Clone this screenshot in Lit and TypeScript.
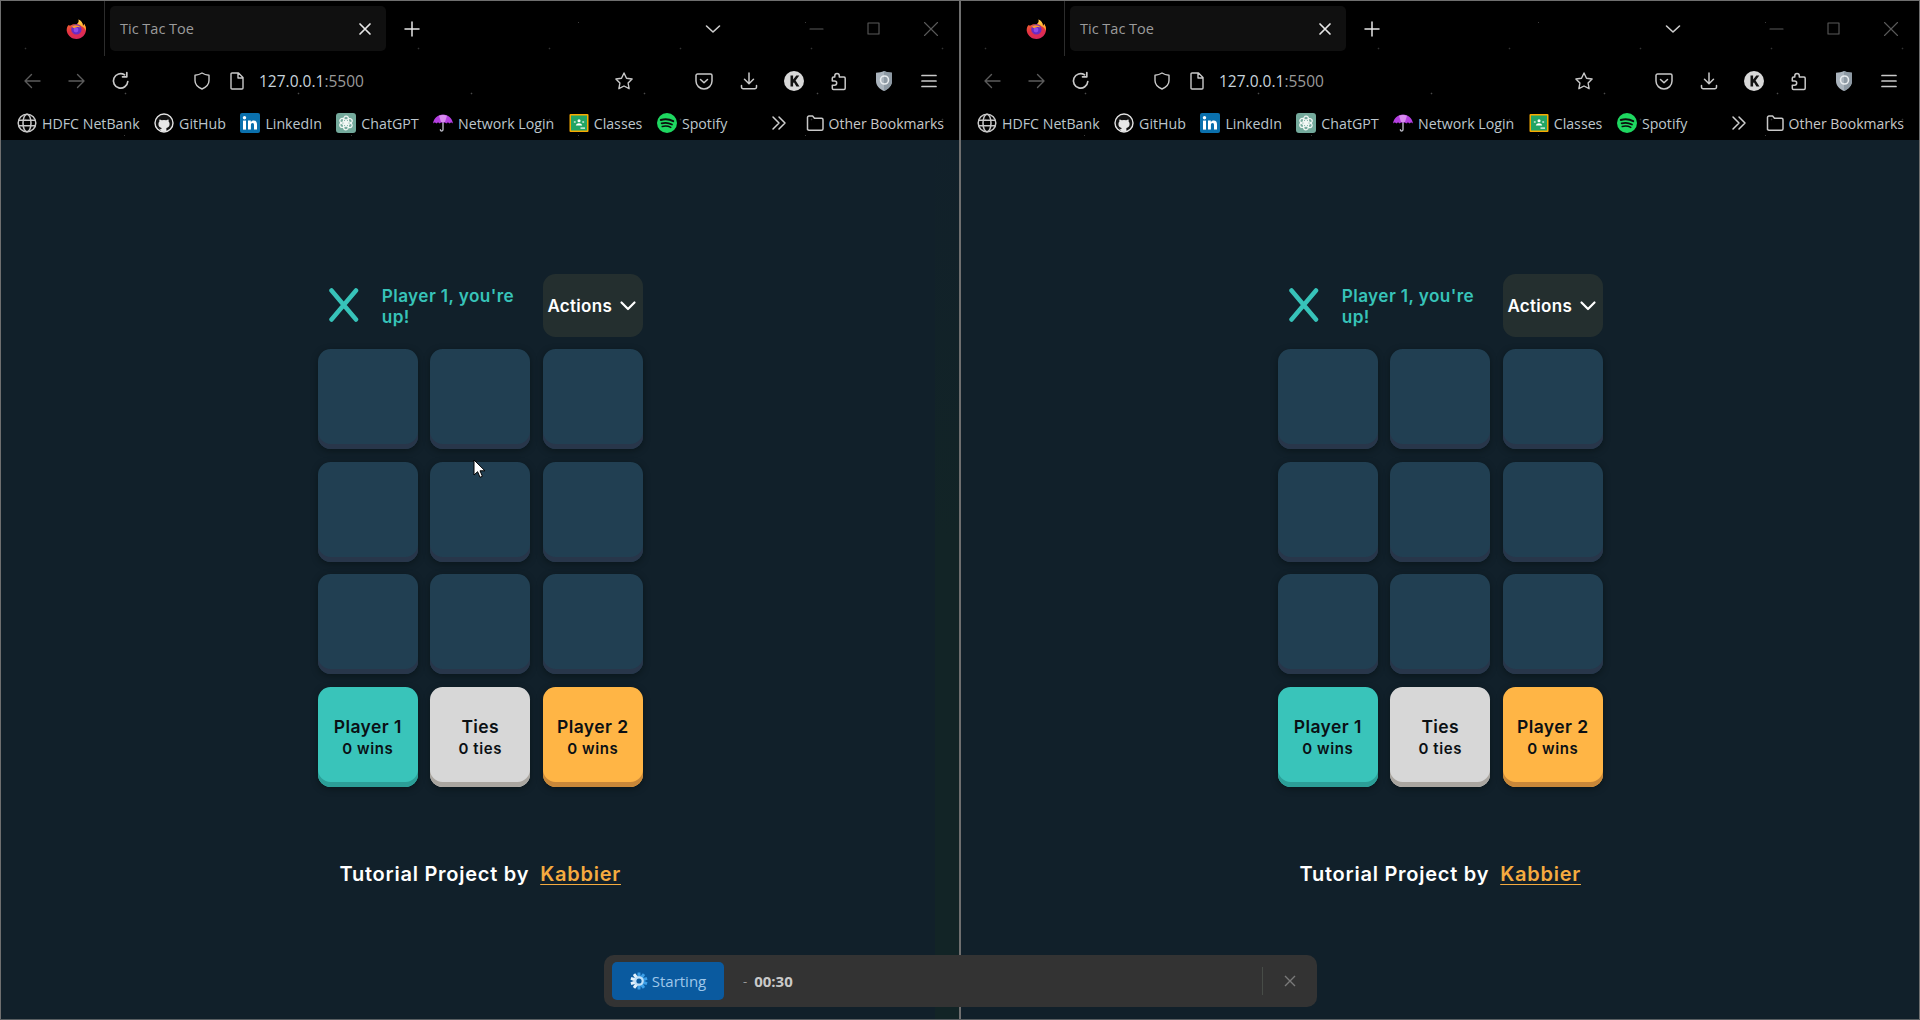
import { LitElement, html, css, svg } from "lit";
import { customElement } from "lit/decorators.js";

const line = (d: string, size = 20, sw = 1.6) => html`<svg
  width=${size}
  height=${size}
  viewBox="0 0 20 20"
  fill="none"
  stroke="currentColor"
  stroke-width=${sw}
  stroke-linecap="round"
  stroke-linejoin="round"
>
  ${svg`<path d=${d}></path>`}
</svg>`;

const firefox = html`<svg width="21" height="21" viewBox="0 0 21 21">
  <defs>
    <linearGradient id="ffa" x1="0" y1="0" x2="0.3" y2="1">
      <stop offset="0" stop-color="#f58a2c"></stop>
      <stop offset="0.6" stop-color="#e8343f"></stop>
      <stop offset="1" stop-color="#d92a5c"></stop>
    </linearGradient>
    <linearGradient id="ffb" x1="0.5" y1="0" x2="0.5" y2="1">
      <stop offset="0" stop-color="#ffe14d"></stop>
      <stop offset="1" stop-color="#ff8a1e"></stop>
    </linearGradient>
  </defs>
  <path
    d="M2.2 6.2 C0.6 8.4 0.4 11 1 13 C2.2 17.2 6 20 10.4 20 C15.8 20 20 15.8 20 10.6 C20 8.6 19.4 6.6 18 4.8 C18 6 17.6 6.6 17 7 C16.8 3.6 14.6 1.2 12.6 0.4 C13.4 3 12 4.4 10.4 5.4 C8.4 5 6 5.4 4.6 6.6 C3.8 6.4 3 6 2.2 6.2 Z"
    fill="url(#ffa)"
  ></path>
  <path
    d="M12.6 0.4 C14.8 1.4 17 3.8 17 7 C17.6 6.6 18 6 18 4.8 C19.6 7 20.4 9.6 19.8 12 C19 9.4 17.6 8 15.6 7.2 C14.2 5.8 12.4 5 10.6 5.2 C12 4.4 13.4 3 12.6 0.4 Z"
    fill="url(#ffb)"
  ></path>
  <circle cx="10.4" cy="10.4" r="5.2" fill="#6a2bc4"></circle>
  <path d="M6 7.4 C8 5.8 12.4 5.4 14.6 8.6 C12 7.4 10 8.2 9 9.4 C7.6 9 6.6 8.4 6 7.4 Z" fill="#ff9a2c"></path>
  <circle cx="10" cy="11" r="2.4" fill="#8f4be8"></circle>
</svg>`;

const globe = html`<svg width="20" height="20" viewBox="0 0 20 20" fill="none" stroke="#c8c8c8" stroke-width="1.5">
  <circle cx="10" cy="10" r="8.8"></circle>
  <ellipse cx="10" cy="10" rx="4" ry="8.8"></ellipse>
  <path d="M1.6 7.2h16.8M1.6 12.8h16.8"></path>
</svg>`;

const github = html`<svg width="20" height="20" viewBox="0 0 20 20">
  <circle cx="10" cy="10" r="9" fill="#111" stroke="#e4e4e4" stroke-width="1.4"></circle>
  <path
    d="M7.6 18.4v-2.6c-2 .4-2.6-.8-2.8-1.4 M7.6 18.4V15c-1.8-.4-3.2-1.4-3.2-4 0-1 .4-1.8 1-2.4-.2-.6-.2-1.4.1-2.2.8 0 1.6.4 2.2.9a8 8 0 0 1 4.6 0c.6-.5 1.4-.9 2.2-.9.3.8.3 1.6.1 2.2.6.6 1 1.4 1 2.4 0 2.6-1.4 3.6-3.2 4v3.4 Z"
    fill="#e8e8e8"
  ></path>
</svg>`;

const linkedin = html`<svg width="20" height="20" viewBox="0 0 20 20">
  <rect width="20" height="20" rx="2" fill="#0a70ad"></rect>
  <rect x="3" y="7.6" width="3" height="9" fill="#fff"></rect>
  <circle cx="4.5" cy="4.8" r="1.7" fill="#fff"></circle>
  <path d="M8 7.6h2.8v1.3c.6-.9 1.6-1.5 2.9-1.5 2.4 0 3.3 1.5 3.3 4v5.2h-3v-4.6c0-1.2-.3-2-1.4-2-1.2 0-1.7.9-1.7 2v4.6H8Z" fill="#fff"></path>
</svg>`;

const chatgpt = html`<svg width="20" height="20" viewBox="0 0 20 20">
  <rect width="20" height="20" rx="3" fill="#74aa9c"></rect>
  <g fill="none" stroke="#f2f7f5" stroke-width="1.2">
    ${[0, 60, 120, 180, 240, 300].map(
      (a) => svg`<ellipse cx="10" cy="6.8" rx="2.6" ry="3.6" transform="rotate(${a} 10 10)"></ellipse>`
    )}
  </g>
</svg>`;

const umbrella = html`<svg width="20" height="20" viewBox="0 0 20 20">
  <path d="M0 10.5C.8 5 5 1.5 10 1.5s9.2 3.5 10 9c-1.4-1.2-2.2-1.2-3.4 0-1.2-1.2-2.2-1.2-3.3 0-1.2-1.2-2.4-1.2-3.3 0-1-1.2-2.2-1.2-3.3 0-1.1-1.2-2.1-1.2-3.3 0-1.2-1.2-2-1.2-3.4 0Z" fill="#b43fe0"></path>
  <path d="M6 2.8C8 1.8 12 1.8 14 2.8L12 9H8Z" fill="#d98cf0"></path>
  <path d="M10 10v6.4c0 2-2.6 2-2.6.4" fill="none" stroke="#b9b9c4" stroke-width="1.4" stroke-linecap="round"></path>
</svg>`;

const classroom = html`<svg width="20" height="20" viewBox="0 0 20 20">
  <rect x="0.5" y="1" width="19" height="18" rx="1" fill="#f9ab00"></rect>
  <rect x="2" y="2.5" width="16" height="15" fill="#22a565"></rect>
  <circle cx="10" cy="7.8" r="1.5" fill="#fff"></circle>
  <circle cx="5.8" cy="9" r="1.1" fill="#b7e1c9"></circle>
  <circle cx="14.2" cy="9" r="1.1" fill="#b7e1c9"></circle>
  <path d="M6.8 12.6c.4-1.6 1.8-2.4 3.2-2.4s2.8.8 3.2 2.4Z" fill="#fff"></path>
  <rect x="11.5" y="14.5" width="4.5" height="1.2" fill="#fff"></rect>
</svg>`;

const spotify = html`<svg width="20" height="20" viewBox="0 0 20 20">
  <circle cx="10" cy="10" r="10" fill="#1ed760"></circle>
  <g fill="none" stroke="#0b0b0b" stroke-linecap="round">
    <path d="M3.8 7c4-1.1 8.6-.8 12.4 1.2" stroke-width="2"></path>
    <path d="M4.6 10.4c3.4-.9 7.2-.6 10.4 1.1" stroke-width="1.7"></path>
    <path d="M5.2 13.5c2.8-.7 6-.5 8.6.9" stroke-width="1.4"></path>
  </g>
</svg>`;

const folder = line("M2.5 16.5V4.5c0-.8.6-1.5 1.5-1.5h3.6l1.9 2.2h7c.8 0 1.5.7 1.5 1.5v9c0 .8-.7 1.5-1.5 1.5H4c-.9 0-1.5-.7-1.5-1.5Z", 20, 1.5);

const extras = html`<svg width="20" height="20" viewBox="0 0 20 20">
  <circle cx="10" cy="10" r="10" fill="#d8d8d8"></circle>
  <path d="M6.5 4.6h2.6v4l3.2-4h3L11.6 9.6l3.9 5.8h-3.1L9.9 11.3 9.1 12.3v3.1H6.5Z" fill="#111"></path>
</svg>`;

const vpn = html`<svg width="18" height="22" viewBox="0 0 18 22">
  <path d="M9 1C6.5 2.2 4 2.6 1 2.8V11c0 4.8 3.5 8 8 10 4.5-2 8-5.2 8-10V2.8C14 2.6 11.5 2.2 9 1Z" fill="#aab4bd"></path>
  <path d="M9 1c2.5 1.2 5 1.6 8 1.8V11c0 4.8-3.5 8-8 10Z" fill="#8e9aa4"></path>
  <circle cx="9.5" cy="10" r="4" fill="none" stroke="#e8ecef" stroke-width="1.6"></circle>
</svg>`;

const bookmarks = [
  { icon: globe, label: "HDFC NetBank" },
  { icon: github, label: "GitHub" },
  { icon: linkedin, label: "LinkedIn" },
  { icon: chatgpt, label: "ChatGPT" },
  { icon: umbrella, label: "Network Login" },
  { icon: classroom, label: "Classes" },
  { icon: spotify, label: "Spotify" },
];

const scores = [
  { cls: "p1", title: "Player 1", sub: "0 wins" },
  { cls: "ties", title: "Ties", sub: "0 ties" },
  { cls: "p2", title: "Player 2", sub: "0 wins" },
];

@customElement("browser-window")
export class BrowserWindow extends LitElement {
  static styles = css`
    :host {
      display: flex;
      flex-direction: column;
      height: 1020px;
      box-sizing: border-box;
      border-top: 1px solid #6f6f6f;
      background: #11202a;
      font-family: "Open Sans", "Noto Sans", sans-serif;
      overflow: hidden;
    }

    .chrome {
      height: 139px;
      flex: none;
      background-color: #000;
      background-image: radial-gradient(circle, #4a4a4a 0.7px, transparent 1.1px),
        radial-gradient(circle, #333 0.7px, transparent 1.1px),
        radial-gradient(circle, #3c3c3c 0.6px, transparent 1px);
      background-size: 173px 97px, 131px 71px, 227px 113px;
      background-position: 38px 44px, 90px 12px, 10px 78px;
    }

    .tabs {
      height: 55px;
      display: flex;
      align-items: center;
      position: relative;
    }

    .logo {
      width: 104px;
      height: 55px;
      box-sizing: border-box;
      padding: 2px 17px 0 0;
      border-right: 1px solid #2c2c2c;
      display: flex;
      align-items: center;
      justify-content: flex-end;
      flex: none;
    }

    .tab {
      margin-left: 5px;
      width: 276px;
      height: 45px;
      box-sizing: border-box;
      border-radius: 5px;
      background: #101010;
      display: flex;
      align-items: center;
      justify-content: space-between;
      padding: 0 11px 0 10px;
      color: #9c9c9c;
      font-size: 14.5px;
      flex: none;
    }

    .tab svg,
    .plus {
      color: #e6e6e6;
    }

    .plus {
      margin-left: 16px;
      display: flex;
    }

    .tab-list {
      margin-left: 281px;
      color: #cfcfcf;
      display: flex;
    }

    .win {
      margin-left: auto;
      display: flex;
      color: #5a5a5a;
    }

    .win span {
      width: 57px;
      display: flex;
      justify-content: center;
    }

    .nav {
      height: 50px;
      display: flex;
      align-items: center;
      padding-left: 8px;
      color: #c9c9c9;
    }

    .slot {
      width: 44px;
      display: flex;
      justify-content: center;
      align-items: center;
      flex: none;
    }

    .slot.off {
      color: #5c5c5c;
      width: 45px;
    }

    .slot.shield {
      margin-left: 37px;
    }

    .slot.page {
      width: 26px;
    }

    .slot.star {
      margin-left: 4px;
    }

    .url {
      font-size: 15.5px;
      color: #9a9a9a;
      margin-left: 9px;
      width: 339px;
    }

    .url b {
      font-weight: 400;
      color: #c8d4dc;
    }

    .right {
      margin-left: auto;
      padding-right: 8px;
      display: flex;
    }

    .right .slot {
      width: 45px;
    }

    .bar {
      height: 34px;
      display: flex;
      align-items: center;
      padding-left: 16px;
      padding-right: 15px;
      gap: 14.5px;
      font-size: 14.2px;
      color: #bcc6cc;
    }

    .mark {
      display: flex;
      align-items: center;
      gap: 5px;
      white-space: nowrap;
    }

    .more {
      margin-left: auto;
      display: flex;
      color: #d0d0d0;
      margin-right: 1px;
    }

    .mark.other {
      color: #c8c8c8;
      gap: 4px;
      font-size: 14px;
    }

    .game {
      flex: 1;
      display: flex;
      flex-direction: column;
      align-items: center;
      padding-top: 134px;
      padding-left: 0.5px;
      font-family: "Inter", "Open Sans", sans-serif;
      position: relative;
    }

    .band {
      position: absolute;
      top: 0;
      right: 0;
      bottom: 0;
      width: 24px;
      background: linear-gradient(#11202a, #122426 45%);
    }

    :host([last]) .band {
      display: none;
    }

    .grid {
      display: grid;
      grid-template-columns: repeat(3, 100px);
      grid-template-rows: 62.5px repeat(4, 100px);
      gap: 12.5px;
    }

    .turn {
      grid-column: 1 / 3;
      display: flex;
      align-items: center;
      color: #37c3b9;
      font-weight: 600;
      font-size: 17.2px;
      letter-spacing: 0.4px;
      line-height: 20.8px;
      padding-top: 3px;
    }

    .turn svg {
      margin: -3px 23px 0 11px;
      flex: none;
    }

    .turn span {
      width: 142px;
    }

    .actions {
      border-radius: 12.5px;
      background: #242f2f;
      color: #fff;
      font-weight: 600;
      font-size: 17px;
      letter-spacing: 0.3px;
      display: flex;
      align-items: center;
      justify-content: center;
      gap: 6px;
      padding-top: 2px;
      box-sizing: border-box;
    }

    .actions svg {
      margin-top: -1px;
    }

    .cell,
    .score {
      border-radius: 12.5px;
      box-shadow: inset 0 -5px 0 #28364a, 0 2px 6px rgba(5, 14, 16, 0.55);
    }

    .cell {
      background: #213f52;
    }

    .score {
      display: flex;
      flex-direction: column;
      align-items: center;
      justify-content: center;
      color: #0b1014;
      box-sizing: border-box;
    }

    .score b {
      font-weight: 600;
      font-size: 17.5px;
      letter-spacing: 0.4px;
      line-height: 23px;
    }

    .score span {
      font-weight: 600;
      font-size: 15px;
      letter-spacing: 0.6px;
      line-height: 21px;
    }

    .p1 {
      background: #39c4ba;
      box-shadow: inset 0 -5px 0 #2c9f98, 0 2px 6px rgba(5, 14, 16, 0.55);
    }

    .ties {
      background: #d7d7d7;
      box-shadow: inset 0 -5px 0 #aaa6a0, 0 2px 6px rgba(5, 14, 16, 0.55);
    }

    .p2 {
      background: #ffb545;
      box-shadow: inset 0 -5px 0 #c98839, 0 2px 6px rgba(5, 14, 16, 0.55);
    }

    .credit {
      margin-top: 74px;
      color: #fff;
      font-weight: 600;
      font-size: 20px;
      letter-spacing: 0.75px;
      line-height: 26px;
      display: flex;
      gap: 11px;
    }

    .credit a {
      color: #f5ab3f;
      text-decoration: underline;
      text-underline-offset: 3px;
      text-decoration-thickness: 1px;
    }
  `;

  render() {
    return html`
      <div class="chrome">
        <div class="tabs">
          <div class="logo">${firefox}</div>
          <div class="tab">
            <span>Tic Tac Toe</span>
            ${line("M5 5l10 10M15 5L5 15", 20, 1.7)}
          </div>
          <div class="plus">${line("M10 3v14M3 10h14", 20, 1.5)}</div>
          <div class="tab-list">${line("M3.5 7l6.5 6 6.5-6", 20, 1.6)}</div>
          <div class="win">
            <span>${line("M3 10h13", 20, 1.1)}</span>
            <span>${line("M4 4h11v11H4Z", 20, 1.1)}</span>
            <span>${line("M3.5 3.5l13 13M16.5 3.5l-13 13", 20, 1.1)}</span>
          </div>
        </div>
        <div class="nav">
          <span class="slot off">${line("M18 10H3M9.5 3.5L3 10l6.5 6.5", 20, 1.4)}</span>
          <span class="slot off">${line("M2 10h15M10.5 3.5L17 10l-6.5 6.5", 20, 1.4)}</span>
          <span class="slot">${line("M16.8 10.5A7.2 7.2 0 1 1 13.5 3.8M15.8 1.5v4.3h-4.3", 20, 1.7)}</span>
          <span class="slot shield">${line("M10 2C7.8 3.4 5.5 4 3 4.2V9.5c0 4 3 6.8 7 8.5 4-1.7 7-4.5 7-8.5V4.2C14.5 4 12.2 3.4 10 2Z", 20, 1.4)}</span>
          <span class="slot page">${line("M5 2h6.5L16 6.5V17c0 .6-.4 1-1 1H5c-.6 0-1-.4-1-1V3c0-.6.4-1 1-1ZM11 2v5h5", 20, 1.4)}</span>
          <span class="url"><b>127.0.0.1</b>:5500</span>
          <span class="slot star">${line("M10 2l2.5 5.2 5.6.8-4 4 1 5.7L10 15l-5.1 2.7 1-5.7-4-4 5.6-.8Z", 20, 1.4)}</span>
          <div class="right">
            <span class="slot">${line("M3.5 3h13c.8 0 1.5.7 1.5 1.5V10c0 4.4-3.6 8-8 8s-8-3.6-8-8V4.5C2 3.7 2.7 3 3.5 3ZM6.5 8.5l3.5 3.3 3.5-3.3", 20, 1.5)}</span>
            <span class="slot">${line("M10 2v10.5M5.5 8.2l4.5 4.5 4.5-4.5M2.5 14.5v1.8c0 .8.7 1.4 1.5 1.4h12c.8 0 1.5-.6 1.5-1.4v-1.8", 20, 1.5)}</span>
            <span class="slot">${extras}</span>
            <span class="slot">${line("M8 2.5c1.4 0 2.3 1 2.3 2.3V6H15c.7 0 1.2.5 1.2 1.2v10c0 .7-.5 1.2-1.2 1.2H4.5c-.7 0-1.2-.5-1.2-1.2v-3h2.2c1.2 0 2.2-.9 2.2-2.1s-1-2.1-2.2-2.1H3.3V7.2C3.3 6.5 3.8 6 4.5 6h1.3V4.8C5.8 3.5 6.6 2.5 8 2.5Z", 20, 1.5)}</span>
            <span class="slot">${vpn}</span>
            <span class="slot">${line("M3 4.5h14M3 10h14M3 15.5h14", 20, 1.7)}</span>
          </div>
        </div>
        <div class="bar">
          ${bookmarks.map((b) => html`<span class="mark">${b.icon}<span>${b.label}</span></span>`)}
          <span class="more">${line("M4 4l6 6-6 6M10 4l6 6-6 6", 20, 1.5)}</span>
          <span class="mark other">${folder}<span>Other Bookmarks</span></span>
        </div>
      </div>
      <div class="game">
        <div class="band"></div>
        <div class="grid">
          <div class="turn">
            <svg width="30" height="34" viewBox="0 0 30 34" fill="none" stroke="#37c3b9" stroke-width="4.5" stroke-linecap="round">
              <path d="M2.5 2.5L27 31.5M27 2.5L2.5 31.5"></path>
            </svg>
            <span>Player 1, you're up!</span>
          </div>
          <div class="actions">Actions ${line("M3.5 6.5l6.5 6.5 6.5-6.5", 20, 2.2)}</div>
          ${Array.from({ length: 9 }, () => html`<div class="cell"></div>`)}
          ${scores.map(
            (s) => html`<div class="score ${s.cls}"><b>${s.title}</b><span>${s.sub}</span></div>`
          )}
        </div>
        <div class="credit"><span>Tutorial Project by</span> <a>Kabbier</a></div>
      </div>
    `;
  }
}

@customElement("app-root")
export class AppRoot extends LitElement {
  static styles = css`
    :host {
      display: grid;
      grid-template-columns: 960px 960px;
      width: 1920px;
      height: 1020px;
      position: relative;
      overflow: hidden;
      font-family: "Open Sans", "Noto Sans", sans-serif;
    }

    .left,
    .second {
      border-right: 1px solid #6f6f6f;
      border-left: 1px solid #6f6f6f;
    }

    .edge {
      position: absolute;
      left: 0;
      right: 0;
      bottom: 0;
      height: 1px;
      background: #5a5f62;
    }

    .cursor {
      position: absolute;
      left: 473px;
      top: 459px;
    }

    .recorder {
      position: absolute;
      left: 604px;
      top: 955px;
      width: 713px;
      height: 52px;
      box-sizing: border-box;
      background: #333;
      border-radius: 10px;
      display: flex;
      align-items: center;
      padding: 0 0 0 8px;
      color: #c9c9c9;
      font-size: 15px;
    }

    .start {
      width: 112px;
      height: 38px;
      border-radius: 5px;
      background: #0a5a9f;
      color: #9fc7ea;
      display: flex;
      align-items: center;
      justify-content: center;
      gap: 4px;
      font-size: 15px;
    }

    .dash {
      margin-left: 19px;
      color: #999;
      font-size: 13px;
    }

    .time {
      margin-left: 7px;
      font-weight: 700;
      font-size: 15px;
    }

    .sep {
      margin-left: auto;
      width: 1px;
      height: 28px;
      background: #474c47;
    }

    .close {
      display: flex;
      margin: 0 17px 0 17px;
      color: #7a7a7a;
    }
  `;

  render() {
    const spokes = Array.from({ length: 10 }, (_, i) => i * 36);
    return html`
      <browser-window class="left"></browser-window>
      <browser-window class="second" last></browser-window>
      <div class="edge"></div>
      <svg class="cursor" width="14" height="20" viewBox="0 0 14 20">
        <path d="M1 1v15l3.6-3.3 2.4 5.6 2.4-1-2.4-5.5H12Z" fill="#fff" stroke="#000" stroke-width="1"></path>
      </svg>
      <div class="recorder">
        <div class="start">
          <svg width="18" height="18" viewBox="0 0 18 18">
            ${spokes.map(
              (a) => svg`<path d="M7.6 0.5h2.8L10.6 5H7.4Z" fill=${a > 180 ? "#e4f2fc" : "#3ea0e8"} transform="rotate(${a} 9 9)"></path>`
            )}
            <circle cx="9" cy="9" r="4.8" fill="#bfe0f8"></circle>
            <circle cx="9" cy="9" r="2.6" fill="#0a5a9f"></circle>
          </svg>
          <span>Starting</span>
        </div>
        <span class="dash">-</span>
        <span class="time">00:30</span>
        <span class="sep"></span>
        <span class="close">
          <svg width="20" height="20" viewBox="0 0 20 20" fill="none" stroke="currentColor" stroke-width="1.4">
            <path d="M5 5l10 10M15 5L5 15"></path>
          </svg>
        </span>
      </div>
    `;
  }
}
